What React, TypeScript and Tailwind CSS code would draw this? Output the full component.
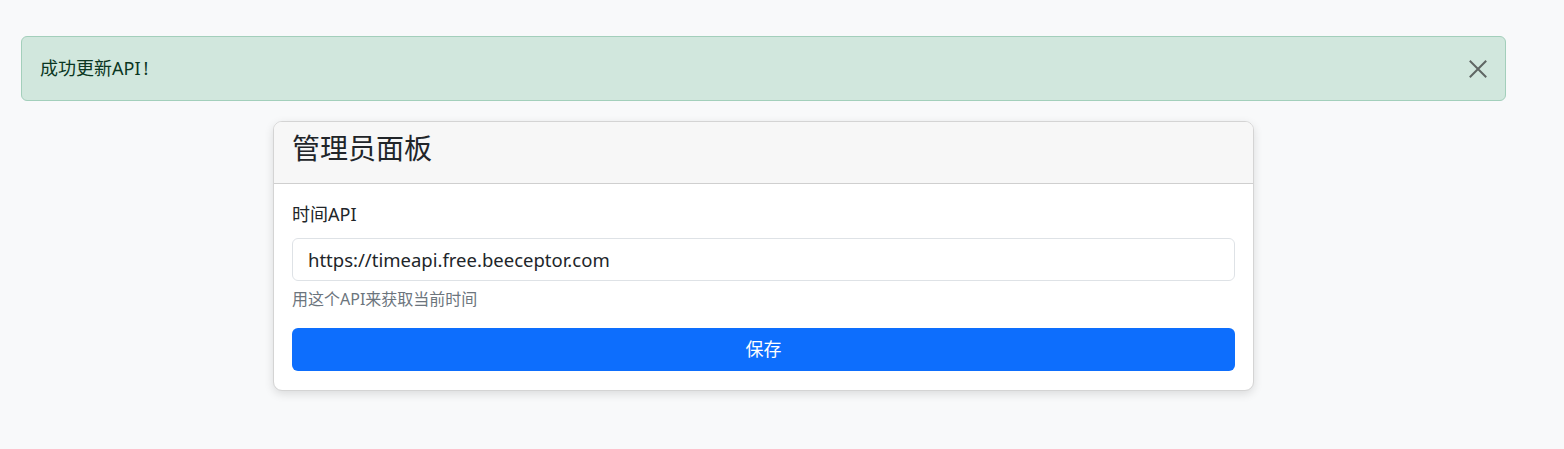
export default function App() {
  return (
    <div className="min-h-[449px] bg-[#f8f9fa] px-[21px] pt-[36px] font-['Noto_Sans','Noto_Sans_CJK_SC',sans-serif] text-[#212529]">
      <div className="flex h-[65px] w-[1485px] items-center justify-between rounded-[6px] border border-[#a3cfbb] bg-[#d1e7dd] pl-[18px] pr-[18px] text-[#0a3622]">
        <span className="text-[18px] leading-[27px]">成功更新API<span className="ml-[3px]">!</span></span>
        <button type="button" aria-label="关闭" className="flex h-[18px] w-[18px] items-center justify-center text-[#5f6663]">
          <svg width="18" height="18" viewBox="0 0 18 18" fill="none" stroke="currentColor" strokeWidth="2" strokeLinecap="square">
            <path d="M1.5 1.5 L16.5 16.5 M16.5 1.5 L1.5 16.5" />
          </svg>
        </button>
      </div>

      <div className="ml-[252px] mt-[20px] flex w-[981px] flex-col overflow-hidden rounded-[9px] border border-[#d4d4d4] bg-white shadow-[0_3px_10px_rgba(0,0,0,0.12)]">
        <div className="flex h-[62px] items-center border-b border-[#cfcfcf] bg-[#f7f7f7] px-[18px] pb-[8px]">
          <h3 className="text-[28px] leading-[1.2] font-normal">管理员面板</h3>
        </div>
        <div className="flex flex-col px-[18px] pt-[17px] pb-[19px]">
          <label className="mb-[10px] text-[18px] leading-[27px]">时间API</label>
          <input
            className="h-[43px] rounded-[6px] border border-[#dee2e6] px-[15px] text-[18.5px] text-[#212529] outline-none"
            defaultValue="https://timeapi.free.beeceptor.com"
          />
          <p className="mt-[6px] text-[16px] leading-[24px] text-[#6c757d]">用这个API来获取当前时间</p>
          <button type="button" className="mt-[17px] h-[43px] rounded-[6px] bg-[#0d6efd] text-[18px] text-white">
            保存
          </button>
        </div>
      </div>
    </div>
  );
}
